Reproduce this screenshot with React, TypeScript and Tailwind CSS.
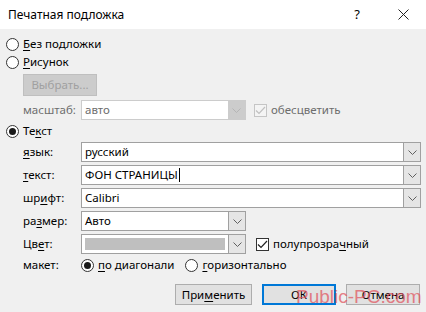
import type { ReactNode } from 'react'

const font = { fontFamily: '"Noto Sans", "Open Sans", sans-serif' }

function Chevron({ color = '#606060' }: { color?: string }) {
  return (
    <svg width="9" height="5" viewBox="0 0 9 5" fill="none">
      <polyline points="0.5,0.5 4.5,4.5 8.5,0.5" stroke={color} strokeWidth="1" />
    </svg>
  )
}

function Radio({ checked, children }: { checked?: boolean; children: ReactNode }) {
  return (
    <div className="flex items-center h-[18px]">
      <span className="w-[13px] h-[13px] rounded-full border border-[#333] bg-white flex items-center justify-center">
        {checked && <span className="w-[7px] h-[7px] rounded-full bg-[#1a1a1a]" />}
      </span>
      <span className="ml-[4px] text-black">{children}</span>
    </div>
  )
}

function U({ children }: { children: ReactNode }) {
  return <span className="underline underline-offset-2 decoration-1">{children}</span>
}

function Combo({ value, width, caret, fill }: { value?: string; width: string; caret?: boolean; fill?: boolean }) {
  return (
    <div className={`${width} h-[20px] flex border border-[#a0a0a0] bg-white`}>
      <div className="flex-1 flex items-center pl-[3px] text-black">
        {fill ? <div className="w-full mr-[3px] h-[12px] bg-[#bfbfbf]" /> : value}
        {caret && <span className="w-px h-[14px] bg-black ml-px" />}
      </div>
      <div className="w-[17px] bg-[#e5e5e5] border-l border-[#a0a0a0] flex items-center justify-center">
        <Chevron />
      </div>
    </div>
  )
}

function Field({ label, children }: { label: ReactNode; children: ReactNode }) {
  return (
    <div className="flex items-center h-[20px] pl-[23px]">
      <div className="w-[58px] text-black">{label}</div>
      {children}
    </div>
  )
}

function Check({ checked, disabled, children }: { checked?: boolean; disabled?: boolean; children: ReactNode }) {
  return (
    <div className="flex items-center">
      <span
        className={`w-[13px] h-[13px] border flex items-center justify-center ${
          disabled ? 'border-[#c5c5c5] bg-[#f4f4f4]' : 'border-[#333] bg-white'
        }`}
      >
        {checked && (
          <svg width="11" height="9" viewBox="0 0 11 9" fill="none">
            <polyline points="1,4.5 4,7.5 10,1" stroke={disabled ? '#c0c0c0' : '#222'} strokeWidth="1.2" />
          </svg>
        )}
      </span>
      <span className={`ml-[4px] ${disabled ? 'text-[#6d6d6d]' : 'text-black'}`}>{children}</span>
    </div>
  )
}

export default function App() {
  return (
    <div className="w-[426px] h-[312px] relative bg-[#f0f0f0] text-[11.5px] leading-none overflow-hidden" style={font}>
      <div className="h-[29px] bg-white flex items-center pl-[8px] text-[12px] text-black">
        <span>Печатная подложка</span>
        <span className="ml-auto mr-[38px] text-[13px]">?</span>
        <svg width="11" height="11" viewBox="0 0 11 11" className="mr-[17px]">
          <path d="M0.5 0.5L10.5 10.5M10.5 0.5L0.5 10.5" stroke="#222" strokeWidth="1" />
        </svg>
      </div>

      <div className="flex flex-col">
        <div className="pl-[6px] pt-[6px]">
          <Radio>
            <U>Б</U>ез подложки
          </Radio>
          <Radio>
            <U>Р</U>исунок
          </Radio>
        </div>

        <div className="pl-[23px] mt-[3px]">
          <div className="w-[74px] h-[22px] bg-[#cccccc] border border-[#bfbfbf] flex items-center justify-center text-[#a0a0a0]">
            Выбрать...
          </div>
        </div>

        <div className="flex items-center h-[20px] pl-[23px] mt-[4px]">
          <div className="w-[58px] text-[#6d6d6d]">масштаб:</div>
          <div className="w-[165px] h-[20px] flex border border-[#cccccc] bg-white">
            <div className="flex-1 flex items-center pl-[3px] text-[#6d6d6d]">авто</div>
            <div className="w-[17px] bg-[#cccccc] flex items-center justify-center">
              <Chevron color="#b5b5b5" />
            </div>
          </div>
          <div className="ml-[8px]">
            <Check checked disabled>
              обесцветить
            </Check>
          </div>
        </div>

        <div className="pl-[6px] mt-[2px]">
          <Radio checked>
            Те<U>к</U>ст
          </Radio>
        </div>

        <div className="flex flex-col gap-[3px] mt-[2px]">
          <Field label={<><U>я</U>зык:</>}>
            <Combo width="w-[340px]" value="русский" />
          </Field>
          <Field label={<><U>т</U>екст:</>}>
            <Combo width="w-[340px]" value="ФОН СТРАНИЦЫ" caret />
          </Field>
          <Field label={<>шр<U>и</U>фт:</>}>
            <Combo width="w-[340px]" value="Calibri" />
          </Field>
          <Field label={<>ра<U>з</U>мер:</>}>
            <Combo width="w-[165px]" value="Авто" />
          </Field>
          <Field label={<>Цв<U>е</U>т:</>}>
            <Combo width="w-[165px]" fill />
            <div className="ml-[10px]">
              <Check checked>
                полупрозра<U>ч</U>ный
              </Check>
            </div>
          </Field>
        </div>

        <div className="flex items-center h-[18px] pl-[23px] mt-[2px]">
          <div className="w-[58px] text-black">макет:</div>
          <Radio checked>
            <U>п</U>о диагонали
          </Radio>
          <div className="ml-[11px]">
            <Radio>
              <U>г</U>оризонтально
            </Radio>
          </div>
        </div>

        <div className="flex justify-end gap-[10px] pr-[6px] mt-[10px]">
          <div className="w-[77px] h-[21px] bg-[#e1e1e1] border border-[#adadad] flex items-center justify-center text-black">
            При<U>м</U>енить
          </div>
          <div className="w-[74px] h-[21px] bg-[#e1e1e1] border-2 border-[#0078d7] flex items-center justify-center text-black">
            ОК
          </div>
          <div className="w-[74px] h-[21px] bg-[#e1e1e1] border border-[#adadad] flex items-center justify-center text-black">
            Отмена
          </div>
        </div>
      </div>

      <div
        className="absolute left-[296px] top-[287px] text-[19px] text-[#e0505a] opacity-70 pointer-events-none"
        style={{ fontFamily: '"Liberation Sans", Arial, sans-serif' }}
      >
        Public-PC.com
      </div>
    </div>
  )
}
